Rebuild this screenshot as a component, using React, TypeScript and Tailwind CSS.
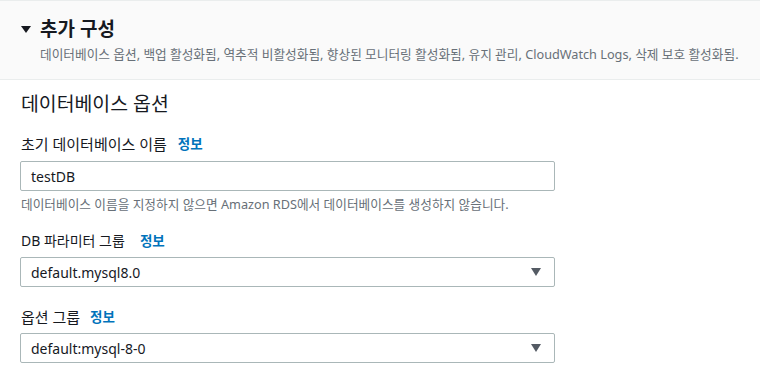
import React from "react";

const font = { fontFamily: '"Noto Sans", "Noto Sans CJK KR", sans-serif' };

function Label({ text, size, gap }: { text: string; size: string; gap: string }) {
  return (
    <div className="flex items-center h-[20px] leading-[20px] text-[#16191f]">
      <span className={size}>{text}</span>
      <span className={`${gap} text-[#0073bb] font-bold text-[13.5px]`}>정보</span>
    </div>
  );
}

function Select({ value }: { value: string }) {
  return (
    <div className="w-[535px] h-[30px] border border-[#aab7b8] rounded-[2px] bg-white flex items-center justify-between pl-[10px] pr-[13px]">
      <span className="text-[14px] text-[#16191f]">{value}</span>
      <svg width="10" height="8" viewBox="0 0 10 8">
        <polygon points="0,0 10,0 5,8" fill="#545b64" />
      </svg>
    </div>
  );
}

export default function App() {
  return (
    <div className="w-[760px] h-[375px] bg-white overflow-hidden" style={font}>
      <div className="h-[80px] border-t border-b border-[#eaeded] bg-[#fafafa] pl-[21px] pt-[16px]">
        <div className="flex items-center h-[24px]">
          <svg width="10" height="7" viewBox="0 0 10 7" className="mr-[9px]">
            <polygon points="0,0 10,0 5,7" fill="#16191f" />
          </svg>
          <span className="text-[19px] font-bold text-[#16191f] leading-[24px]">추가 구성</span>
        </div>
        <div className="mt-[5px] pl-[19px] text-[12.7px] leading-[16px] text-[#687078] whitespace-nowrap">
          데이터베이스 옵션, 백업 활성화됨, 역추적 비활성화됨, 향상된 모니터링 활성화됨, 유지 관리, CloudWatch Logs, 삭제 보호 활성화됨.
        </div>
      </div>
      <div className="pl-[20px] pt-[11px]">
        <div className="pl-[1px] text-[19.4px] leading-[26px] text-[#16191f]">데이터베이스 옵션</div>
        <div className="mt-[17px] pl-[1px]">
          <Label text="초기 데이터베이스 이름" size="text-[15px]" gap="ml-[11px]" />
        </div>
        <div className="mt-[7px] w-[535px] h-[30px] border border-[#aab7b8] rounded-[2px] bg-white flex items-center pl-[10px]">
          <span className="text-[14px] text-[#16191f]">testDB</span>
        </div>
        <div className="mt-[5px] pl-[1px] text-[12.7px] leading-[16px] text-[#687078] whitespace-nowrap">
          데이터베이스 이름을 지정하지 않으면 Amazon RDS에서 데이터베이스를 생성하지 않습니다.
        </div>
        <div className="mt-[19px] pl-[1px]">
          <Label text="DB 파라미터 그룹" size="text-[14px]" gap="ml-[15px]" />
        </div>
        <div className="mt-[6px]">
          <Select value="default.mysql8.0" />
        </div>
        <div className="mt-[20px] pl-[1px]">
          <Label text="옵션 그룹" size="text-[15px]" gap="ml-[10px]" />
        </div>
        <div className="mt-[6px]">
          <Select value="default:mysql-8-0" />
        </div>
      </div>
    </div>
  );
}
